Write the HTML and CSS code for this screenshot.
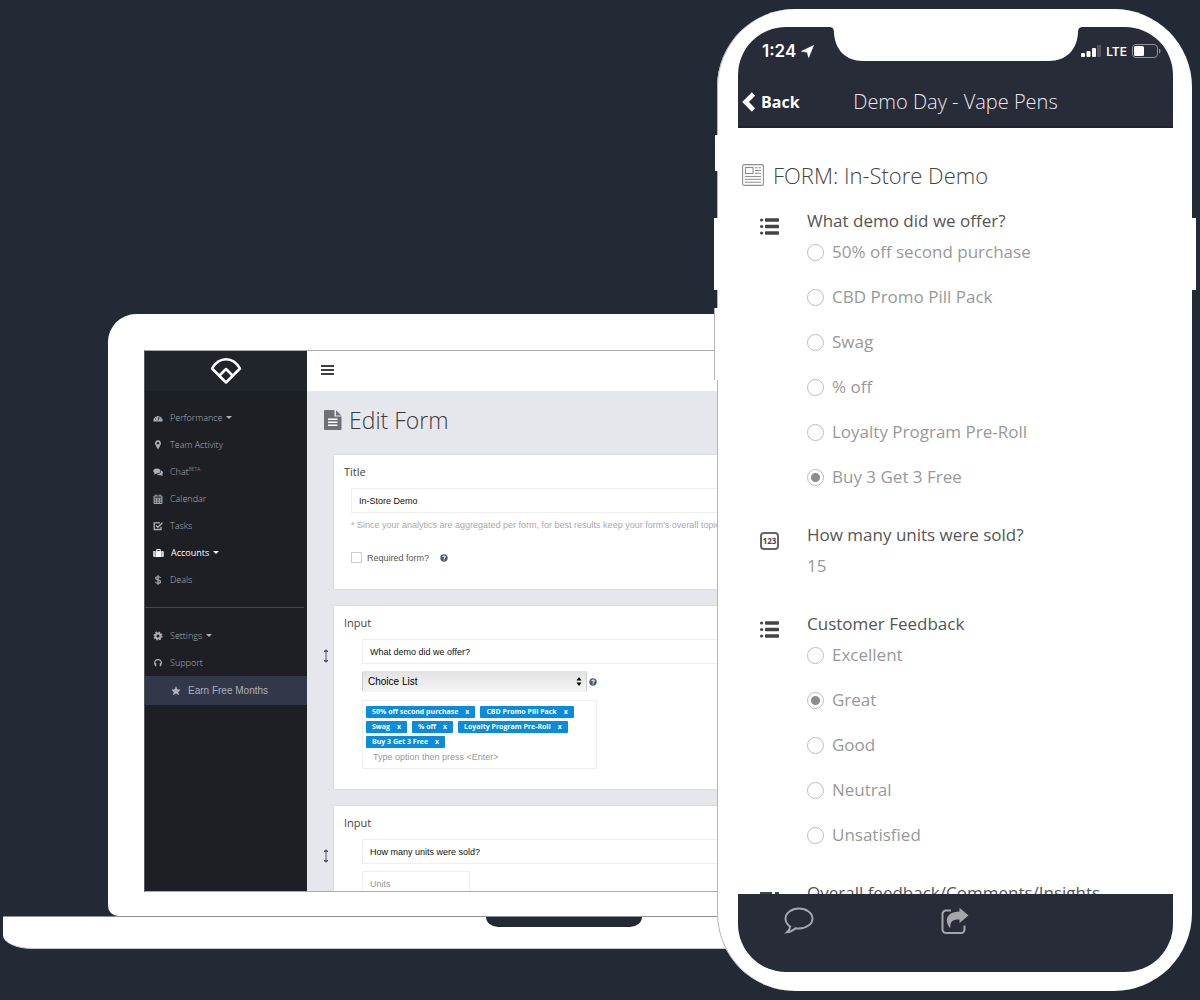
FILE: index.html
```html
<!DOCTYPE html>
<html lang="en">
<head>
<meta charset="utf-8">
<title>Form builder</title>
<link rel="stylesheet" href="styles.css">
</head>
<body>
<svg class="sprite" aria-hidden="true">
  <symbol id="list" viewBox="0 0 19 17"><g fill="currentColor"><circle cx="1.6" cy="2" r="1.6"/><circle cx="1.6" cy="8.500" r="1.6"/><circle cx="1.6" cy="15" r="1.6"/><rect x="5" y=".2" width="14" height="3.600" rx=".8"/><rect x="5" y="6.700" width="14" height="3.600" rx=".8"/><rect x="5" y="13.200" width="14" height="3.600" rx=".8"/></g></symbol>
  <symbol id="help" viewBox="0 0 10 10"><circle cx="5" cy="5" r="4.600" fill="currentColor"/><path d="M3.500 3.900C3.600 2 6.600 2.100 6.500 3.800C6.400 4.800 5.100 4.900 5.100 6" fill="none" stroke="#fff" stroke-width="1.300"/><rect x="4.400" y="6.800" width="1.400" height="1.300" fill="#fff"/></symbol>
  <symbol id="move" viewBox="0 0 6 14"><path d="M3 1v12M1 2.500L3 .8l2 1.700zM1 11.500L3 13.200l2-1.700z" fill="currentColor" stroke="currentColor" stroke-width="1"/></symbol>
</svg>
<main class="scene">
  <section class="laptop">
    <div class="lid">
      <div class="app">
        <aside class="side">
          <div class="brand"><svg width="32" height="28" viewBox="0 0 32 28" fill="none" stroke="#fff" stroke-width="2.500" stroke-linejoin="round"><path d="M2 11.500C9-1 23-1 30 11.500L16 25.500z"/><path d="M9.500 18.500L16 12l6.500 6.500"/></svg></div>
          <nav class="menu">
            <a href="#"><svg viewBox="0 0 10 10"><path d="M.5 8.500a4.600 4.600 0 1 1 9 0z" fill="currentColor"/><path d="M5 7.500l1.300-4M2 6h1M3 3.500l.6.500M7.600 6h.8" stroke="#1e1f25" stroke-width=".9"/></svg>Performance<i class="caret"></i></a>
            <a href="#"><svg viewBox="0 0 10 10"><path d="M5 .3a3 3 0 0 1 2.700 4.300L5 9.800 2.300 4.600A3 3 0 0 1 5 .3z" fill="currentColor"/><circle cx="5" cy="3.300" r="1.200" fill="#1e1f25"/></svg>Team Activity</a>
            <a href="#"><svg viewBox="0 0 10 10"><path d="M3.800 1.500c5 0 5 5 0 5L1 7.800l.5-1.800C-1 4.300.5 1.500 3.800 1.500z" fill="currentColor"/><path d="M8 3.500c2.500 1.300 2.300 3 1.200 4l.5 1.500-2.200-.7c-1.500.2-2.800-.2-3.500-1C7 7.300 8.300 5.500 8 3.500z" fill="currentColor"/></svg><span>Chat<sup>BETA</sup></span></a>
            <a href="#"><svg viewBox="0 0 10 10"><path d="M1 2h8v7.500H1zM1 4.200h8M1 6h8M1 7.800h8M3.700 4v5.500M6.300 4v5.500M3 .3v2M7 .3v2" fill="none" stroke="currentColor" stroke-width=".9"/></svg>Calendar</a>
            <a href="#"><svg viewBox="0 0 10 10"><path d="M8 5.800v2.700H1.200V1.800H7M3 4.500l1.800 1.800L9.400 1.800" fill="none" stroke="currentColor" stroke-width="1.300"/></svg>Tasks</a>
            <a href="#" class="on"><svg viewBox="0 0 11 10"><path d="M.3 3h1.500v6H1.300a1 1 0 0 1-1-1zM2.400 3h6.200v6H2.400zM9.200 3h.5a1 1 0 0 1 1 1v4a1 1 0 0 1-1 1h-.5z" fill="currentColor"/><path d="M3.800 3V1.500h3.400V3" fill="none" stroke="currentColor"/></svg>Accounts<i class="caret"></i></a>
            <a href="#"><svg viewBox="0 0 10 10"><path d="M7.500 3C7 1.300 2.700 1.300 2.700 3.200 2.700 5.300 7.500 4.500 7.500 6.700 7.500 8.700 3 8.700 2.500 6.900M5 .2v9.600" fill="none" stroke="currentColor" stroke-width="1.200"/></svg>Deals</a>
            <hr>
            <a href="#"><svg viewBox="0 0 10 10"><circle cx="5" cy="5" r="2.500" fill="none" stroke="currentColor" stroke-width="2"/><circle cx="5" cy="5" r="3.900" fill="none" stroke="currentColor" stroke-width="1.300" stroke-dasharray="1.700 1.363"/></svg>Settings<i class="caret"></i></a>
            <a href="#"><svg viewBox="0 0 10 10"><path d="M2 6.500C-.5 0 10.500 0 8 6.500" fill="none" stroke="currentColor" stroke-width="1.200"/><path d="M1.300 5l2 .3v3H2zM8.700 5l-2 .3v3H8z" fill="currentColor"/></svg>Support</a>
            <a href="#" class="promo"><svg viewBox="0 0 10 10"><path d="M5 .3l1.400 3 3.300.4-2.400 2.200.6 3.300L5 7.600 2.100 9.200l.6-3.300L.3 3.700l3.300-.4z" fill="currentColor"/></svg>Earn Free Months</a>
          </nav>
        </aside>
        <div class="content">
          <header class="top"><button class="burger" aria-label="Menu"><i></i><i></i><i></i></button></header>
          <h1><svg width="18" height="20" viewBox="0 0 18 20"><path d="M1 0h9.500v6.500H17.500V19a1 1 0 0 1-1 1H1a1 1 0 0 1-1-1V1a1 1 0 0 1 1-1z" fill="#707176"/><path d="M12 .3L17.300 5.500H12z" fill="#707176"/><path d="M4 9.300h9.500M4 12.300h9.500M4 15.300h9.500" stroke="#fff" stroke-width="1.400"/></svg>Edit Form</h1>
          <div class="panel first">
            <label class="name" for="title">Title</label>
            <input class="box" id="title" value="In-Store Demo">
            <p class="note">* Since your analytics are aggregated per form, for best results keep your form's overall topic consistent.</p>
            <div class="check"><input type="checkbox" id="req"><label for="req">Required form?</label><svg class="help"><use href="#help"/></svg></div>
          </div>
          <div class="row">
            <svg class="move"><use href="#move"/></svg>
            <div class="panel second">
              <label class="name" for="q1">Input</label>
              <input class="box" id="q1" value="What demo did we offer?">
              <div class="pick">
                <div class="select"><select aria-label="Input type"><option>Choice List</option></select><svg width="6" height="9" viewBox="0 0 6 9"><path d="M3 0l2.500 3.500h-5zM3 9L.5 5.500h5z"/></svg></div>
                <svg class="help"><use href="#help"/></svg>
              </div>
              <div class="tags">
                <span class="tag">50% off second purchase<button>x</button></span>
                <span class="tag">CBD Promo Pill Pack<button>x</button></span>
                <span class="tag">Swag<button>x</button></span>
                <span class="tag">% off<button>x</button></span>
                <span class="tag">Loyalty Program Pre-Roll<button>x</button></span>
                <span class="tag">Buy 3 Get 3 Free<button>x</button></span>
                <input aria-label="New option" placeholder="Type option then press &lt;Enter&gt;">
              </div>
            </div>
          </div>
          <div class="row">
            <svg class="move"><use href="#move"/></svg>
            <div class="panel third">
              <label class="name" for="q2">Input</label>
              <input class="box" id="q2" value="How many units were sold?">
              <input class="box units" aria-label="Units" placeholder="Units">
            </div>
          </div>
        </div>
      </div>
    </div>
    <div class="base"><div class="lip"></div></div>
  </section>

  <section class="phone">
    <i class="key mute"></i><i class="key up"></i><i class="key down"></i><i class="key power"></i>
    <div class="screen">
      <header class="bar">
        <svg class="notch" width="254" height="36" viewBox="0 0 254 36"><path d="M0 0V1C4 1 5 3 5 7C6 24 17 35 34 35H220C237 35 248 24 249 7C249 3 250 1 254 1V0z" fill="#fff"/></svg>
        <div class="status">
          <span class="time">1:24<svg width="13" height="13" viewBox="0 0 13 13"><path d="M12.500.5L7.700 12.500 6.200 7.200.5 6.300z" fill="#fff" stroke="#fff" stroke-width=".6"/></svg></span>
          <span class="net"><svg width="20" height="12" viewBox="0 0 20 12" fill="#fff"><rect y="8" width="4" height="4" rx="1"/><rect x="5.500" y="6" width="4" height="6" rx="1"/><rect x="11" y="3" width="4" height="9" rx="1"/><rect x="16" y="0" width="4" height="12" rx="1" opacity=".2"/></svg>LTE<svg width="29" height="14" viewBox="0 0 29 14"><rect x=".5" y=".5" width="25" height="13" rx="3.500" fill="none" stroke="#8f919a"/><rect x="2" y="2" width="10" height="10" rx="1.500" fill="#fff"/><path d="M27 4.500c2 .8 2 4.200 0 5z" fill="#8f919a"/></svg></span>
        </div>
        <div class="nav">
          <button class="back"><svg width="14" height="22" viewBox="0 0 14 22"><path d="M11.500 3L3.500 11l8 8" fill="none" stroke="#fff" stroke-width="4.600"/></svg>Back</button>
          <h2>Demo Day - Vape Pens</h2>
        </div>
      </header>
      <div class="sheet">
        <h3><svg width="22" height="22" viewBox="0 0 22 22" fill="none" stroke="#8d8d8d" stroke-width="1.100"><rect x=".6" y=".6" width="20.800" height="20.800" rx="1.500"/><rect x="3.500" y="3.500" width="7.500" height="6"/><path d="M13 3.700h2.500M16.500 3.700h2.500M13 6.500h6M13 9.300h6M2.800 12.500H19M2.800 15.300H19M2.800 18.200H19"/></svg>FORM: In-Store Demo</h3>
        <fieldset>
          <svg class="kind"><use href="#list"/></svg>
          <legend>What demo did we offer?</legend>
          <div class="opts">
            <label><input type="radio" name="demo">50% off second purchase</label>
            <label><input type="radio" name="demo">CBD Promo Pill Pack</label>
            <label><input type="radio" name="demo">Swag</label>
            <label><input type="radio" name="demo">% off</label>
            <label><input type="radio" name="demo">Loyalty Program Pre-Roll</label>
            <label><input type="radio" name="demo" checked>Buy 3 Get 3 Free</label>
          </div>
        </fieldset>
        <fieldset>
          <span class="kind num">123</span>
          <legend>How many units were sold?</legend>
          <div class="opts"><p>15</p></div>
        </fieldset>
        <fieldset>
          <svg class="kind"><use href="#list"/></svg>
          <legend>Customer Feedback</legend>
          <div class="opts">
            <label><input type="radio" name="fb">Excellent</label>
            <label><input type="radio" name="fb" checked>Great</label>
            <label><input type="radio" name="fb">Good</label>
            <label><input type="radio" name="fb">Neutral</label>
            <label><input type="radio" name="fb">Unsatisfied</label>
          </div>
        </fieldset>
        <fieldset>
          <svg class="kind" viewBox="0 0 19 17"><path d="M0 2h12v3H0zM15 2h4v3h-4zM0 9h19v3H0z" fill="currentColor"/></svg>
          <legend>Overall feedback/Comments/Insights</legend>
        </fieldset>
      </div>
      <footer class="tools">
        <button aria-label="Comment"><svg width="30" height="28" viewBox="0 0 30 28"><path d="M15 1.500C22.500 1.500 28.500 6 28.500 11.500S22.500 21.500 15 21.500C13.800 21.500 12.600 21.400 11.500 21.200C9 23.500 6.500 25 3 25.300C5 23.500 6 21.800 6.200 19.500C3.300 17.600 1.500 14.800 1.500 11.500C1.500 6 7.500 1.500 15 1.500z" fill="none" stroke="#a4a6ae" stroke-width="2"/></svg></button>
        <button aria-label="Share"><svg width="28" height="28" viewBox="0 0 28 28"><path d="M10 3.500H5A3.500 3.500 0 0 0 1.500 7V22.500A3.500 3.500 0 0 0 5 26H20A3.500 3.500 0 0 0 23.500 22.500V18.500" fill="none" stroke="#a4a6ae" stroke-width="2"/><path d="M18.500.8L27.500 8.500 18.500 16V12.500C11.500 12.300 8.800 14.500 9.300 21.500C2.500 13 6 4.800 18.500 4.600z" fill="#a4a6ae"/></svg></button>
      </footer>
    </div>
  </section>
</main>
</body>
</html>
```
FILE: styles.css
```css
* { box-sizing: border-box; }
body { margin: 0; background: #232a36; font-family: "Open Sans", sans-serif; }
button, input, select { font: inherit; margin: 0; padding: 0; border: 0; background: none; color: inherit; }
h1, h2, h3, p { margin: 0; font-weight: 300; }
a { color: inherit; text-decoration: none; }
svg { flex: none; display: block; }
.sprite { display: none; }

.scene { display: flex; height: 100vh; min-height: 700px; padding: 9px 8px 9px 3px; overflow: hidden; }

/* Laptop */
.laptop { flex: 1; min-width: 0; margin: 305px -44px 42px 0; display: flex; flex-direction: column; }
.lid { flex: 1; min-height: 0; display: flex; margin-left: 105px; padding: 36px 0 24px 36px; background: #fff; border-radius: 28px 0 0 10px; }
.app { flex: 1; min-width: 0; display: flex; overflow: hidden; border: 1px solid #a9abb0; border-left-color: #55575d; }
.base { height: 33px; background: #fff; border-top: 1px solid #8f9196; border-bottom: 1px solid #c9cbce; border-radius: 0 0 0 30px / 0 0 0 14px; }
.lip { width: 156px; height: 10px; margin-left: 483px; background: #232a36; border-radius: 0 0 12px 12px / 0 0 10px 10px; }

.side { flex: none; width: 162px; background: #1e1f25; color: #aeb0b8; }
.brand { height: 40px; background: #20252b; display: flex; justify-content: center; padding-top: 6px; }
.menu { padding-top: 13px; font-size: 9px; font-weight: 300; }
.menu a { display: flex; align-items: center; gap: 7px; height: 27px; padding-left: 8px; }
.menu svg { width: 10px; height: 10px; }
.menu sup { font-size: 5px; line-height: 0; vertical-align: 4px; }
.menu hr { margin: 14px 3px 14px 0; border: 0; border-top: 1px solid #45474e; }
.menu .on { color: #fff; font-weight: 400; }
.menu .on svg { width: 11px; }
.caret { border: 3px solid transparent; border-top-color: currentColor; border-bottom: 0; margin-left: -3px; }
.menu .promo { height: 29px; padding-left: 26px; background: #33374a; font: 10px "Liberation Sans", Arial, sans-serif; }

.content { flex: 1; min-width: 0; background: #e6e7ec; color: #333; font-size: 9px; font-family: "Liberation Sans", Arial, sans-serif; }
.top { height: 40px; background: #fff; padding: 14px; }
.burger { display: grid; gap: 2px; width: 13px; }
.burger i { height: 2px; background: #3c3d46; }
h1 { display: flex; align-items: center; gap: 7px; height: 58px; margin-bottom: 6px; padding-left: 17px; font: 300 23px "Open Sans", sans-serif; color: #3c3c40; }
.panel { flex: 1; min-width: 0; background: #fff; box-shadow: 0 0 2px #c8cad0; }
.first { margin-left: 27px; height: 134px; padding: 8px 0 0 10px; }
.row { display: flex; margin-top: 17px; }
.move { width: 6px; height: 14px; margin: 43px 5px 0 16px; color: #555b66; }
.name { display: block; height: 18px; font: 400 11px/18px "Open Sans", sans-serif; color: #444; }
.box { display: block; width: 100%; height: 25px; padding: 0 7px; border: 1px solid #eee; color: #111; }
.first .box { margin: 7px 0 0 7px; }
.note { margin: 6px 0 0 7px; line-height: 12px; color: #aaa; white-space: nowrap; }
.check { display: flex; align-items: center; margin: 21px 0 0 7px; color: #555; }
.check input { appearance: none; width: 11px; height: 11px; border: 1px solid #ccc; margin-right: 5px; }
.help { width: 8px; height: 8px; color: #4d5a70; }
.check .help { margin-left: 11px; }
.second { height: 183px; padding: 8px 0 0 28px; }
.third { height: 120px; padding: 8px 0 0 28px; }
.second .name, .third .name { margin-left: -18px; }
.second .box, .third .box { margin-top: 7px; }
.pick { display: flex; align-items: center; gap: 2px; margin-top: 7px; }
.select { display: flex; align-items: center; width: 225px; height: 21px; padding: 0 4px 0 5px; border: solid #ccc; border-width: 0 1px; border-radius: 3px; background: linear-gradient(#e2e2e2, #f6f6f6); }
.select select { appearance: none; flex: 1; color: #000; font-size: 10px; }
.tags { display: flex; flex-wrap: wrap; gap: 3px 5px; width: 235px; height: 69px; margin-top: 8px; padding: 5px 3px; border: 1px solid #eee; align-content: flex-start; }
.tag { display: flex; gap: 7px; height: 12px; padding: 0 6px; border-radius: 1px; background: #0b8bdc; color: #fff; font: 700 7px/12px "Open Sans", sans-serif; }
.tags input { width: 160px; height: 12px; margin-left: 7px; }
.third .units { width: 108px; }
::placeholder { color: #999; opacity: 1; }

/* Phone */
.phone { position: relative; flex: none; width: 475px; padding: 18px 19px 19px 21px; background: #fff; border-radius: 78px; box-shadow: inset 1px 0 #b4b6ba; display: flex; }
.key { position: absolute; width: 4px; background: #fff; }
.mute { left: -2px; top: 126px; height: 36px; }
.up { left: -3px; top: 209px; height: 72px; }
.down { left: -3px; top: 299px; height: 72px; border-left: 1px solid #b4b6ba; }
.power { right: -4px; top: 209px; height: 72px; }
.screen { flex: 1; min-width: 0; display: flex; flex-direction: column; overflow: hidden; border-radius: 48px; }
.bar { position: relative; flex: none; height: 101px; background: #282b38; color: #fff; border-bottom: 2px solid #1f212c; }
.notch { position: absolute; top: -1px; left: 91px; }
.status { display: flex; justify-content: space-between; align-items: center; height: 48px; padding: 0 12px 0 24px; font-family: Inter, sans-serif; }
.time, .net { display: flex; align-items: center; gap: 5px; font-size: 17px; font-weight: 600; }
.net { font-size: 12px; }
.nav { display: grid; grid-template-columns: 1fr auto 1fr; align-items: center; height: 52px; }
.back { display: flex; align-items: center; gap: 5px; padding: 2px 0 0 4px; font-size: 16px; font-weight: 700; }
h2 { font-size: 20px; color: #e8e9ee; }
.sheet { flex: 1; min-height: 0; overflow: hidden; padding: 33px 4px 0; }
h3 { display: flex; align-items: center; gap: 9px; height: 28px; margin-bottom: 20px; font-size: 22px; color: #444; }
fieldset { display: grid; grid-template-columns: 65px 1fr; margin: 0 0 34px; padding: 0; border: 0; min-width: 0; font-size: 17px; line-height: 24px; color: #555; }
legend { float: left; padding: 0; grid-column: 2; grid-row: 1; }
.kind { grid-column: 1; grid-row: 1; width: 19px; height: 17px; margin: 9px 0 -9px 18px; color: #444; }
.num { height: 18px; border: 2px solid #666; border-radius: 4px; font: 700 8px/14px "Open Sans", sans-serif; text-align: center; }
.opts { grid-column: 2; display: grid; gap: 21px; margin-top: 7px; color: #999; }
.opts label { display: flex; align-items: center; gap: 8px; }
.opts p { font-weight: 400; }
.opts input { appearance: none; width: 17px; height: 17px; border: 1px solid #bbb; border-radius: 50%; }
.opts input:checked { background: radial-gradient(#8c8c8c 4px, #fff 5px); }
.tools { flex: none; display: flex; align-items: flex-start; gap: 127px; height: 78px; padding: 13px 46px; background: #282b38; }
```
